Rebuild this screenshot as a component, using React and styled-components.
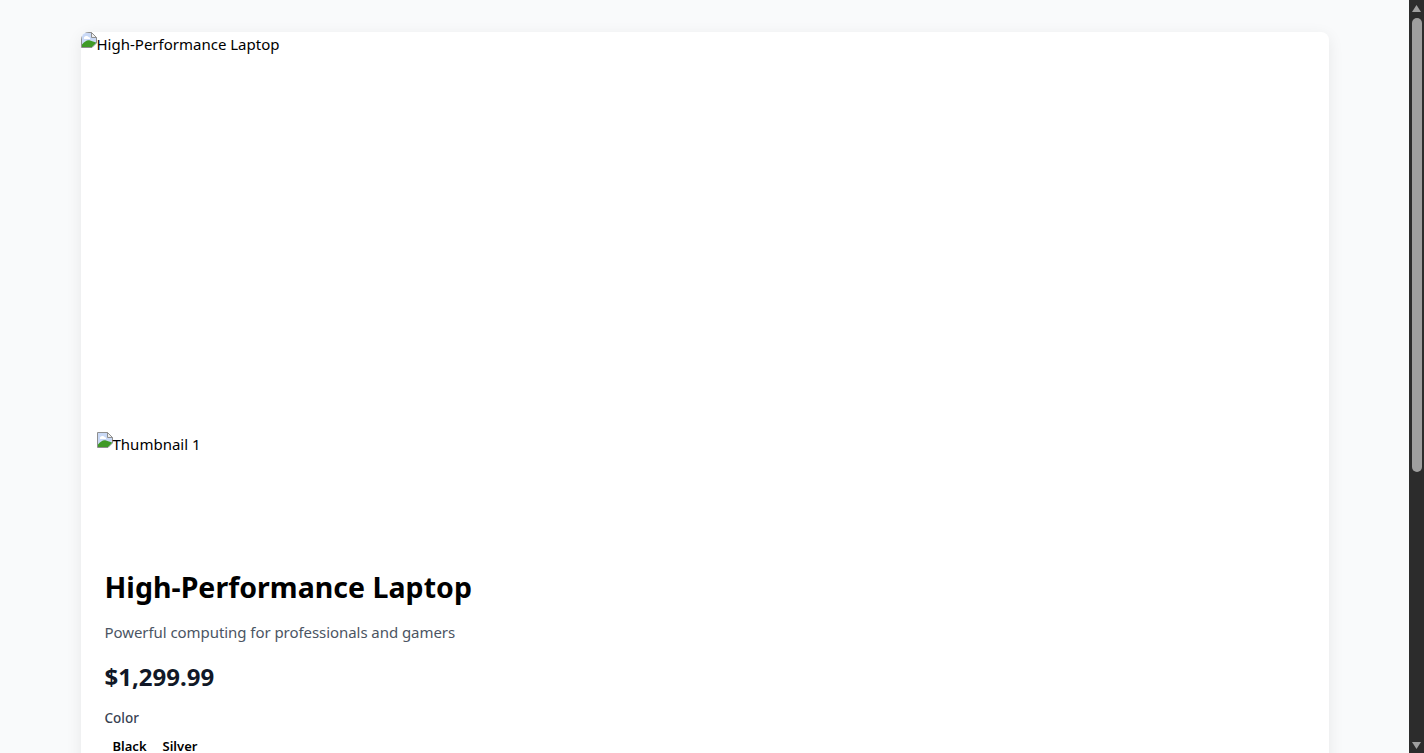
import React from 'react';
import styled, { createGlobalStyle } from 'styled-components';

const Global = createGlobalStyle`
  html {
    background: #f9fafb;
  }
  body {
    margin: 0;
    font-family: "Noto Sans", "Open Sans", sans-serif;
    color: #000;
    overflow-x: hidden;
  }
  * {
    box-sizing: border-box;
  }
`;

const Page = styled.div`
  padding: 32px 31px 32px 16px;
`;

const Card = styled.div`
  max-width: 1248px;
  margin: 0 auto;
  background: #fff;
  border-radius: 8px;
  box-shadow: 0 4px 16px rgba(0, 0, 0, 0.08);
  overflow: hidden;
`;

const ImageSlot = styled.div`
  display: flex;
  align-items: flex-start;
  height: ${(p) => p.$height}px;
  font-size: 15px;
  line-height: 24px;
`;

const Thumbs = styled.div`
  padding: 0 16px 13px;
`;

const Info = styled.div`
  padding: 24px;
`;

const Title = styled.h1`
  margin: 0 0 15px;
  font-size: 28.5px;
  line-height: 36px;
  font-weight: 700;
  letter-spacing: 0.03px;
`;

const Subtitle = styled.p`
  margin: 0 0 17px;
  font-size: 15px;
  line-height: 24px;
  letter-spacing: -0.06px;
  color: #4b5563;
`;

const Price = styled.div`
  margin-bottom: 15px;
  font-size: 24px;
  line-height: 32px;
  font-weight: 700;
  color: #111827;
`;

const OptionLabel = styled.div`
  margin-bottom: 4px;
  font-size: 13.5px;
  line-height: 20px;
  font-weight: 500;
  color: #374151;
`;

const Swatches = styled.div`
  display: flex;
`;

const Swatch = styled.button`
  padding: 4px 8px;
  border: 0;
  background: none;
  font: inherit;
  font-size: 13px;
  line-height: 20px;
  font-weight: 600;
  color: #000;
`;

const ScrollBar = styled.div`
  position: fixed;
  top: 0;
  right: 0;
  bottom: 0;
  width: 15px;
  padding: 5px 0 4px;
  display: flex;
  flex-direction: column;
  align-items: center;
  background: #2c2c2c;
`;

const ScrollThumb = styled.div`
  width: 10px;
  height: 454px;
  margin-top: 6px;
  border-radius: 5px;
  background: #9f9f9f;
`;

const ScrollArrow = styled.svg`
  display: block;
  width: 9px;
  height: 7px;
  fill: #9f9f9f;
  margin-top: ${(p) => (p.$down ? 'auto' : '0')};
`;

const BrokenIcon = styled.svg`
  flex: none;
  width: 16px;
  height: 16px;
`;

const BrokenImage = () => (
  <BrokenIcon viewBox="0 0 16 16">
    <path d="M0.5 15.5V0.5H10.5L15.5 5.5V11L11 15.5Z" fill="#c9d9f6" stroke="#8f8f8f" />
    <path d="M3 5.5C4 3.5 7 3.5 8 5.5H9V7H3Z" fill="#fff" />
    <path d="M1 15V12.5C3.5 9.5 6.5 7.5 9 8.5L15 10.5V11L11 15Z" fill="#3f9a26" />
    <path d="M10.5 0.5V5.5H15.5Z" fill="#f0f0f0" stroke="#8f8f8f" />
    <path d="M16 11.5L11.5 16H16Z" fill="#fff" />
  </BrokenIcon>
);

export default function App() {
  return (
    <>
      <Global />
      <Page>
        <Card>
          <ImageSlot $height={400}>
            <BrokenImage />
            High-Performance Laptop
          </ImageSlot>
          <Thumbs>
            <ImageSlot $height={100}>
              <BrokenImage />
              Thumbnail 1
            </ImageSlot>
          </Thumbs>
          <Info>
            <Title>High-Performance Laptop</Title>
            <Subtitle>Powerful computing for professionals and gamers</Subtitle>
            <Price>$1,299.99</Price>
            <OptionLabel>Color</OptionLabel>
            <Swatches>
              <Swatch>Black</Swatch>
              <Swatch>Silver</Swatch>
            </Swatches>
          </Info>
        </Card>
      </Page>
      <ScrollBar>
        <ScrollArrow viewBox="0 0 9 7"><path d="M4.5 0L9 7H0Z" /></ScrollArrow>
        <ScrollThumb />
        <ScrollArrow $down viewBox="0 0 9 7"><path d="M0 0H9L4.5 7Z" /></ScrollArrow>
      </ScrollBar>
    </>
  );
}
